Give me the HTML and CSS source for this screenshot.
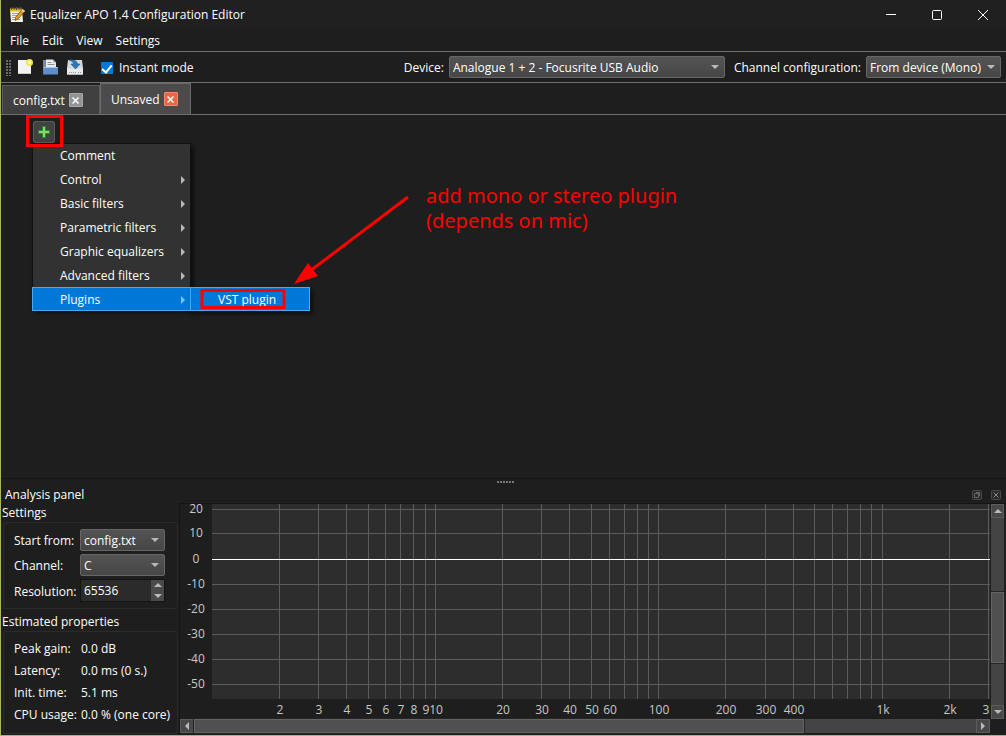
FILE: index.html
```html
<!DOCTYPE html>
<html lang="en">
<head>
<meta charset="utf-8">
<title>Equalizer APO 1.4 Configuration Editor</title>
<link rel="stylesheet" href="styles.css">
</head>
<body>
<div class="window">
  <header class="titlebar">
    <svg class="app-icon" width="16" height="16" viewBox="0 0 16 16" aria-hidden="true">
      <path d="M1 2h12l1 13H2z" fill="#f4f1e4"/>
      <path d="M1 1.500h12v3H1z" fill="#e8b42c"/>
      <path d="M2.500 0v3M5 0v3M7.500 0v3M10 0v3M12 0v3" stroke="#57513f" stroke-width="1"/>
      <path d="M3 6.500h8M3 8.500h6M3 10.500h5M3 12.500h8" stroke="#a5a49c" stroke-width="1"/>
      <path d="M13.500 2l2.500 2-7 8-3 1.500.8-3.500z" fill="#e39a25" stroke="#6b4512" stroke-width=".7"/>
      <path d="M13.500 2l2.500 2-1.200 1.400-2.500-2z" fill="#d8d0c2"/>
    </svg>
    <h1 class="title">Equalizer APO 1.4 Configuration Editor</h1>
    <div class="window-buttons">
      <button type="button" aria-label="Minimize"><svg width="10" height="10" viewBox="0 0 10 10"><path d="M0 4.500h10" stroke="#fff"/></svg></button>
      <button type="button" aria-label="Maximize"><svg width="10" height="10" viewBox="0 0 10 10"><rect x=".5" y=".5" width="9" height="9" rx="1" fill="none" stroke="#fff"/></svg></button>
      <button type="button" aria-label="Close"><svg width="10" height="10" viewBox="0 0 10 10"><path d="M0 0l10 10M10 0L0 10" stroke="#fff"/></svg></button>
    </div>
  </header>

  <nav class="menubar">
    <button type="button">File</button>
    <button type="button">Edit</button>
    <button type="button">View</button>
    <button type="button">Settings</button>
  </nav>

  <div class="toolbar">
    <span class="handle"></span>
    <button type="button" class="tool" aria-label="New">
      <svg width="16" height="16" viewBox="0 0 16 16"><path d="M1 1h13v14H1z" fill="#f3f3f1"/><path d="M1 14.500h13" stroke="#c9c9c5"/><circle cx="12.500" cy="3.500" r="3.500" fill="#f3e24a"/><circle cx="12.500" cy="3.500" r="1.700" fill="#fffbb8"/></svg>
    </button>
    <button type="button" class="tool" aria-label="Open">
      <svg width="16" height="16" viewBox="0 0 16 16"><path d="M1 1h4l1 2v9H1z" fill="#7d8893"/><path d="M4 .5h7l3 3V9H4z" fill="#e9ecef"/><path d="M11 .5v3h3z" fill="#aab1b8"/><path d="M5.500 3.500h4M5.500 5.500h7" stroke="#8b949d"/><path d="M1.500 8H16v7.500H1z" fill="#5e8fcb"/><path d="M1.700 8.500h14" stroke="#a6c4e8"/></svg>
    </button>
    <button type="button" class="tool" aria-label="Save">
      <svg width="16" height="16" viewBox="0 0 16 16"><path d="M1 1h14l1 8v6.500H0V9z" fill="#d3d7da"/><path d="M0 9.500h16v6H0z" fill="#e8eaec"/><path d="M2 13.500h7M11 13.500h3" stroke="#8f979e" stroke-dasharray="1 1"/><path d="M2 1c5-1 8 1 8.500 4H13L8.500 10 4 5h2.700C6.300 3 4.500 1.800 2 1z" fill="#2f78b7" stroke="#185488" stroke-width=".6"/></svg>
    </button>
    <label class="instant"><input type="checkbox" class="check" checked>Instant mode</label>
    <div class="toolbar-right">
      <label for="device">Device:</label>
      <span class="combo combo-device"><select id="device"><option>Analogue 1 + 2 - Focusrite USB Audio</option></select></span>
      <label for="channels" class="channels-label">Channel configuration:</label>
      <span class="combo combo-channels"><select id="channels"><option>From device (Mono)</option></select></span>
    </div>
  </div>

  <div class="tabs">
    <div class="tab"><span>config.txt</span><button type="button" class="tab-close" aria-label="Close config.txt"><svg width="7" height="7" viewBox="0 0 7 7"><path d="M.5.5l6 6M6.500.5l-6 6" stroke="#fff" stroke-width="1.500"/></svg></button></div>
    <div class="tab tab-active"><span>Unsaved</span><button type="button" class="tab-close" aria-label="Close Unsaved"><svg width="7" height="7" viewBox="0 0 7 7"><path d="M.5.5l6 6M6.500.5l-6 6" stroke="#fff" stroke-width="1.500"/></svg></button></div>
  </div>

  <main class="workspace">
    <button type="button" class="add" aria-label="Add">
      <svg width="12" height="12" viewBox="0 0 12 12"><path d="M4.500.5h3v4h4v3h-4v4h-3v-4h-4v-3h4z" fill="#7fdc6c" stroke="#2c8c2c"/></svg>
    </button>
    <ul class="menu">
      <li><button type="button">Comment</button></li>
      <li class="has-sub"><button type="button">Control</button></li>
      <li class="has-sub"><button type="button">Basic filters</button></li>
      <li class="has-sub"><button type="button">Parametric filters</button></li>
      <li class="has-sub"><button type="button">Graphic equalizers</button></li>
      <li class="has-sub"><button type="button">Advanced filters</button></li>
      <li class="has-sub selected"><button type="button">Plugins</button>
        <ul class="submenu"><li><button type="button">VST plugin</button></li></ul>
      </li>
    </ul>
    <svg class="marks" width="420" height="200" viewBox="0 0 420 200" aria-hidden="true">
      <rect x="27.500" y="1.500" width="34" height="29" fill="none" stroke="#f00" stroke-width="3"/>
      <rect x="202" y="175.500" width="82" height="17" fill="none" stroke="#f00" stroke-width="3"/>
      <path d="M408 82L310 156" stroke="#f00" stroke-width="3"/>
      <path d="M294 169l14-21 10 13z" fill="#f00"/>
    </svg>
    <p class="note">add mono or stereo plugin<br>(depends on mic)</p>
  </main>

  <section class="dock">
    <div class="splitter"><i></i><i></i><i></i><i></i><i></i><i></i></div>
    <div class="dock-head">
      <h2>Analysis panel</h2>
      <div class="dock-buttons">
        <button type="button" aria-label="Float"><svg width="10" height="10" viewBox="0 0 10 10"><rect x=".5" y=".5" width="9" height="9" rx="1" fill="#292929" stroke="#4a4a4a"/><path d="M2.500 3.500h4v4h-4zM4 2.500h3.500V6" fill="none" stroke="#666"/></svg></button>
        <button type="button" aria-label="Close panel"><svg width="10" height="10" viewBox="0 0 10 10"><rect x=".5" y=".5" width="9" height="9" rx="1" fill="#292929" stroke="#4a4a4a"/><path d="M2.500 2.500l5 5M7.500 2.500l-5 5" stroke="#8a8a8a"/></svg></button>
      </div>
    </div>
    <div class="dock-body">
      <div class="side">
        <h3>Settings</h3>
        <div class="group settings">
          <label for="start">Start from:</label>
          <span class="combo"><select id="start"><option>config.txt</option></select></span>
          <label for="channel">Channel:</label>
          <span class="combo"><select id="channel"><option>C</option></select></span>
          <label for="resolution">Resolution:</label>
          <span class="spin"><input id="resolution" type="text" value="65536"><span class="spin-buttons"><button type="button" class="up" aria-label="Increase"></button><button type="button" class="down" aria-label="Decrease"></button></span></span>
        </div>
        <h3 class="second">Estimated properties</h3>
        <dl class="group properties">
          <dt>Peak gain:</dt><dd>0.0 dB</dd>
          <dt>Latency:</dt><dd>0.0 ms (0 s.)</dd>
          <dt>Init. time:</dt><dd>5.1 ms</dd>
          <dt>CPU usage:</dt><dd>0.0 % (one core)</dd>
        </dl>
      </div>
      <div class="plot">
        <svg class="chart" width="100%" height="215" role="img" aria-label="Gain by frequency">
          <rect x="32" y="0" width="100%" height="195" fill="#2d2d2d"/>
          <path class="grid" d="M99.500 0v195M138.500 0v195M166.500 0v195M188.500 0v195M205.500 0v195M220.500 0v195M233.500 0v195M245.500 0v195M255.500 0v195M322.500 0v195M361.500 0v195M389.500 0v195M411.500 0v195M429.500 0v195M444.500 0v195M457.500 0v195M468.500 0v195M478.500 0v195M545.500 0v195M585.500 0v195M613.500 0v195M634.500 0v195M652.500 0v195M667.500 0v195M680.500 0v195M691.500 0v195M702.500 0v195M769.500 0v195M808.500 0v195"/>
          <path class="grid" d="M32 5.500h2000M32 29.500h2000M32 80.500h2000M32 105.500h2000M32 130.500h2000M32 155.500h2000M32 180.500h2000"/>
          <path class="response" d="M32 55.500h2000"/>
          <g class="axis">
            <text x="16" y="9">20</text><text x="16" y="33">10</text><text x="16" y="59">0</text><text x="16" y="84">-10</text><text x="16" y="109">-20</text><text x="16" y="134">-30</text><text x="16" y="159">-40</text><text x="16" y="184">-50</text>
            <text x="100" y="210">2</text><text x="139" y="210">3</text><text x="167" y="210">4</text><text x="189" y="210">5</text><text x="206" y="210">6</text><text x="221" y="210">7</text><text x="234" y="210">8</text><text x="246" y="210">9</text><text x="256" y="210">10</text>
            <text x="323" y="210">20</text><text x="362" y="210">30</text><text x="390" y="210">40</text><text x="412" y="210">50</text><text x="430" y="210">60</text><text x="479" y="210">100</text><text x="546" y="210">200</text><text x="586" y="210">300</text><text x="614" y="210">400</text><text x="703" y="210">1k</text><text x="770" y="210">2k</text><text x="809" y="210">3k</text>
          </g>
        </svg>
        <div class="vscroll"><button type="button" class="up" aria-label="Scroll up"></button><div class="track"><div class="thumb"></div></div><button type="button" class="down" aria-label="Scroll down"></button></div>
        <div class="hscroll"><button type="button" class="left" aria-label="Scroll left"></button><div class="track"><div class="thumb"></div></div><button type="button" class="right" aria-label="Scroll right"></button></div>
      </div>
    </div>
  </section>
</div>
</body>
</html>
```
FILE: styles.css
```css
* { box-sizing: border-box; }

body {
  margin: 0;
  background: #1e1e1e;
  color: #fff;
  font: 12px/16px "Open Sans", "Noto Sans", sans-serif;
}

button, input, select { font: inherit; color: inherit; }
button { padding: 0; border: 0; background: none; }
h1, h2, h3, p, ul, dl, dd { margin: 0; padding: 0; font-size: 12px; font-weight: 400; }
ul { list-style: none; }
svg { display: block; }

.window {
  display: flex;
  flex-direction: column;
  min-height: 100vh;
  border-left: 1px solid #a9b560;
  border-bottom: 1px solid #a9b560;
}

.titlebar {
  display: flex;
  align-items: center;
  height: 30px;
  padding-left: 8px;
  background: #202020;
}
.title { flex: 1; margin-left: 5px; }
.window-buttons { display: flex; }
.window-buttons button { display: grid; place-items: center; width: 46px; height: 30px; }

.menubar { display: flex; gap: 1px; height: 21px; padding-left: 3px; }
.menubar button { padding: 0 6px; }

.toolbar {
  display: flex;
  align-items: center;
  height: 32px;
  padding: 0 5px;
  border-top: 1px solid #6e6e6e;
  border-bottom: 1px solid #6e6e6e;
}
.toolbar label { padding-top: 2px; }
.handle {
  width: 5px;
  height: 17px;
  margin-right: 6px;
  background: repeating-linear-gradient(#1e1e1e 0 1px, transparent 1px 3px), repeating-linear-gradient(90deg, #6a6a6a 0 2px, #1e1e1e 2px 3px);
}
.tool { width: 25px; height: 18px; }
.instant { display: flex; align-items: center; gap: 6px; margin-left: 9px; }
.check {
  appearance: none;
  display: grid;
  width: 12px;
  height: 12px;
  margin: 0;
  background: #0078d7;
  place-items: center;
}
.check:checked::before {
  content: "";
  width: 4px;
  height: 8px;
  border: solid #fff;
  border-width: 0 2px 2px 0;
  rotate: 40deg;
}
.toolbar-right { display: flex; align-items: center; gap: 5px; margin-left: auto; }
.channels-label { margin-left: 4px; }

.combo { position: relative; display: block; }
.combo select {
  appearance: none;
  display: block;
  width: 100%;
  height: 22px;
  padding: 1px 15px 0 3px;
  border: 1px solid #666;
  border-radius: 2px;
  background: linear-gradient(#545454, #464646);
}
.combo::after {
  content: "";
  position: absolute;
  top: 9px;
  right: 6px;
  border: 4px solid transparent;
  border-top-color: #b9b9b9;
  border-bottom: 0;
  pointer-events: none;
}
.combo-device { width: 276px; }
.combo-channels { width: 135px; }

.tabs {
  display: flex;
  align-items: flex-end;
  height: 32px;
  padding-left: 1px;
  border-bottom: 1px solid #6e6e6e;
}
.tab {
  display: flex;
  align-items: center;
  gap: 4px;
  width: 98px;
  height: 29px;
  padding-left: 10px;
  border: 1px solid #5c5c5c;
  border-bottom: 0;
  background: #404040;
}
.tab span { padding-top: 2px; }
.tab-active { width: 91px; height: 31px; background: #4b4b4b; border-color: #6a6a6a; }
.tab-close { display: grid; place-items: center; width: 14px; height: 14px; border: 1px solid #a8a8a8; border-radius: 1px; background: #949494; }
.tab-active .tab-close { border-color: #f08a68; background: #e86744; }

.workspace { position: relative; flex: 1; min-height: 220px; }
.add {
  display: grid;
  place-items: center;
  width: 22px;
  height: 22px;
  margin: 6px 0 0 32px;
  border: 1px solid #5a5a5a;
  border-radius: 2px;
  background: #424242;
}
.menu {
  position: absolute;
  top: 28px;
  left: 31px;
  width: 159px;
  border: 1px solid #111;
  border-bottom: 0;
  background: #323232;
  box-shadow: 3px 3px 4px #0008;
}
.menu button { display: block; width: 100%; height: 24px; padding-left: 27px; text-align: left; }
.menu li { position: relative; }
.has-sub::after {
  content: "";
  position: absolute;
  top: 8px;
  right: 5px;
  border: 4px solid transparent;
  border-left-color: #b9b9b9;
  border-right: 0;
}
.menu .selected { margin: -1px; background: #0078d7; border: 1px solid #47aaf5; }
.menu .selected button { height: 22px; padding-top: 1px; }
.selected::after { border-left-color: #7cc4fb; }
.submenu {
  position: absolute;
  top: -1px;
  left: 157px;
  width: 120px;
  border: 1px solid #47aaf5;
  background: #0078d7;
  box-shadow: 3px 3px 4px #0008;
}
.marks { position: absolute; top: 0; left: -1px; pointer-events: none; }
.note {
  position: absolute;
  top: 68px;
  left: 425px;
  color: #f00;
  font-family: "Noto Sans", sans-serif;
  font-size: 20px;
  line-height: 25px;
}

.splitter { display: flex; justify-content: center; gap: 1px; height: 8px; padding: 2px 0 0 4px; border-top: 1px solid #151515; }
.splitter i { width: 2px; height: 2px; background: #777; }
.dock-head { display: flex; align-items: center; justify-content: space-between; height: 17px; padding: 0 5px 0 4px; }
.dock-buttons { display: flex; gap: 9px; }
.dock-body { display: grid; grid-template-columns: 178px minmax(0, 1fr); }
.side { padding: 2px 1px 1px; }
.second { margin-top: 5px; }
.group { margin: 1px 0 0 1px; border: 1px solid #2b2b2b; border-radius: 3px; }
.settings {
  display: grid;
  grid-template-columns: 66px 85px;
  gap: 3px 0;
  align-items: center;
  padding: 6px 0 6px 10px;
}
.settings label { padding-top: 2px; }
.spin { display: flex; height: 23px; border: 1px solid #141414; }
.spin input { flex: 1; min-width: 0; padding: 1px 3px 0; border: 0; background: #2b2b2b; }
.spin-buttons { display: grid; width: 13px; background: #4a4a4a; }
.up, .down, .left, .right { display: grid; place-items: center; }
.up::before, .down::before, .left::before, .right::before { content: ""; border: 4px solid transparent; }
.up::before { border-bottom-color: #b9b9b9; border-top: 0; }
.down::before { border-top-color: #b9b9b9; border-bottom: 0; }
.left::before { border-right-color: #b9b9b9; border-left: 0; }
.right::before { border-left-color: #b9b9b9; border-right: 0; }
.properties {
  display: grid;
  grid-template-columns: 67px 1fr;
  padding: 6px 0 7px 10px;
  line-height: 22px;
  white-space: nowrap;
}

.plot {
  display: grid;
  grid-template: 215px 14px / minmax(0, 1fr) 14px;
  padding-right: 2px;
  border-top: 1px solid #151515;
  border-left: 1px solid #151515;
}
.chart { overflow: hidden; }
.grid { stroke: #5c5c5c; }
.response { stroke: #fff; }
.axis { fill: #c8c8c8; text-anchor: middle; }
.vscroll, .hscroll { display: flex; background: #444; }
.vscroll { flex-direction: column; margin-left: 1px; }
.vscroll button { height: 14px; border: 1px solid #5c5c5c; background: #484848; }
.hscroll button { width: 14px; border: 1px solid #5c5c5c; background: #484848; }
.track { flex: 1; }
.thumb { border: 1px solid #646464; background: #505050; outline: 1px solid #252525; }
.vscroll .thumb { height: 38%; margin-top: 74px; }
.hscroll .thumb { width: 78%; height: 14px; }
```
